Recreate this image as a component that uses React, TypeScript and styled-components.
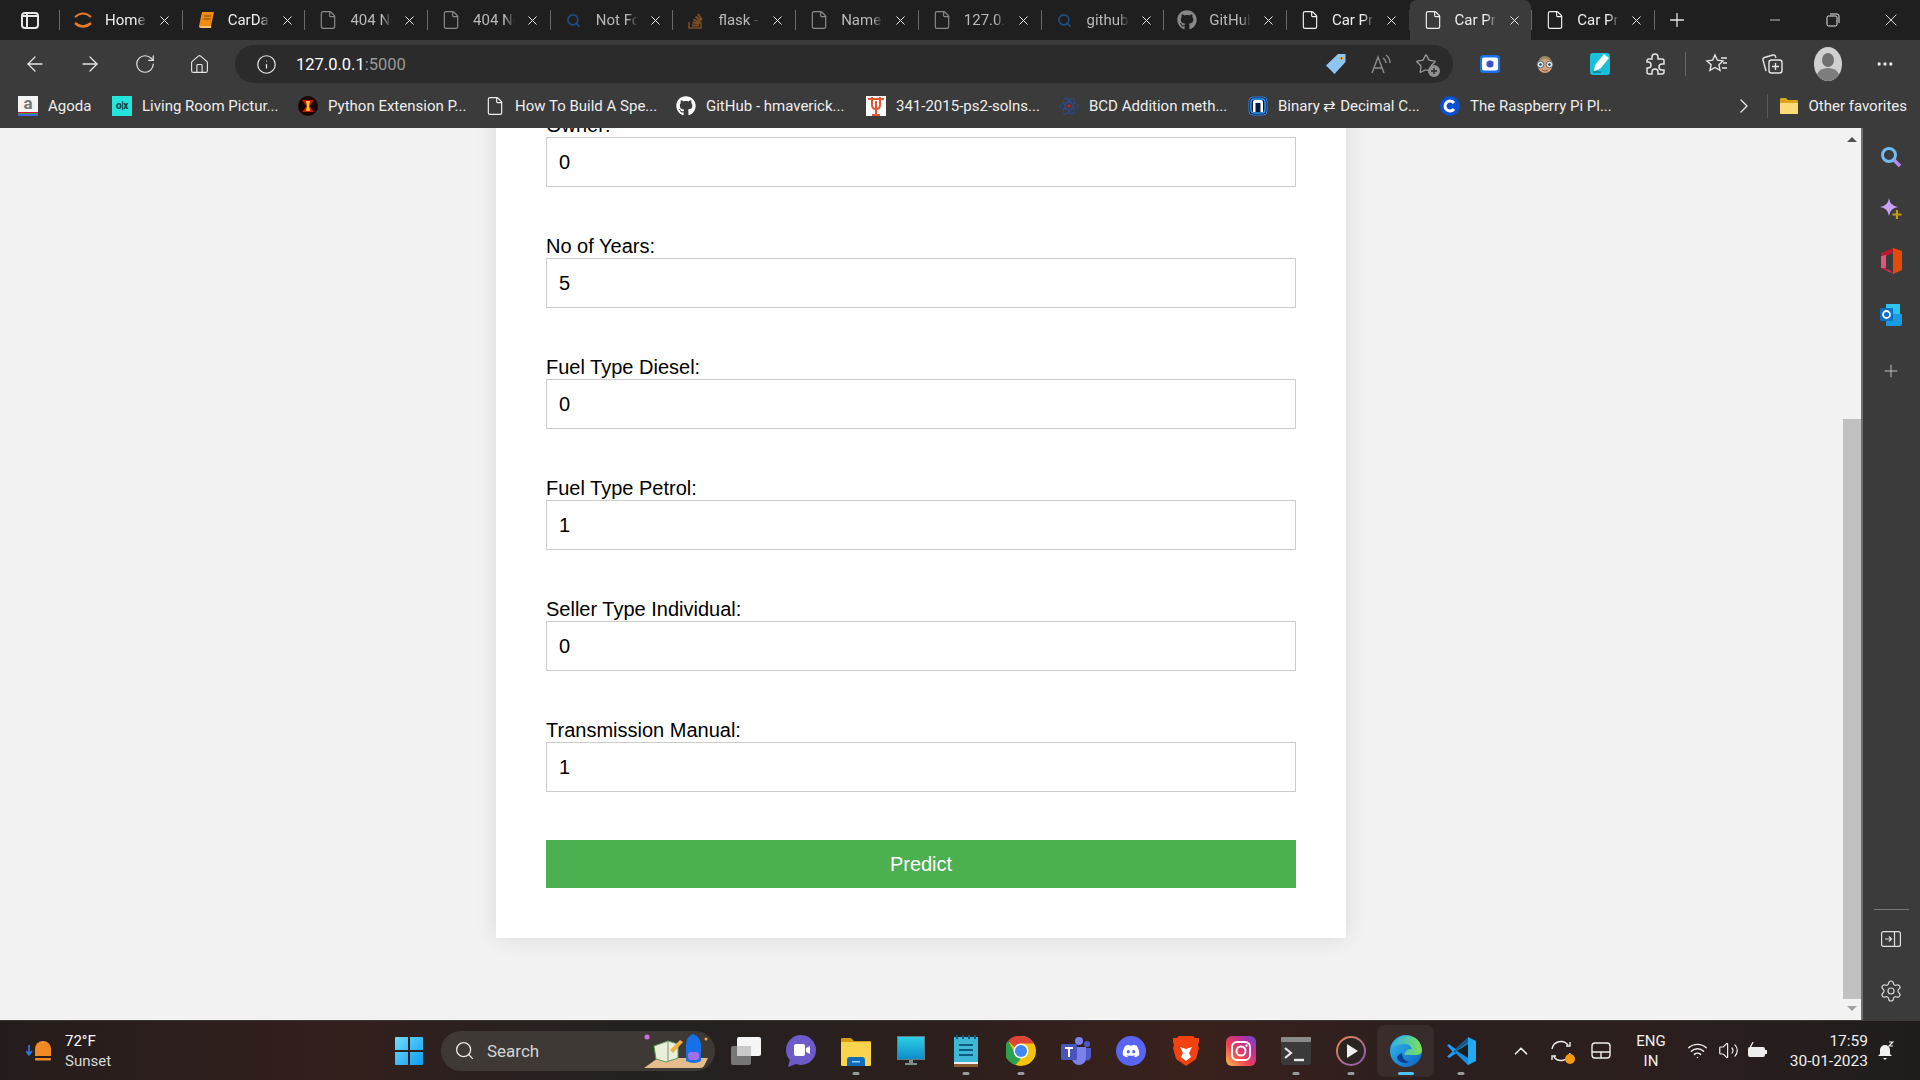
import React from 'react';
import styled, { createGlobalStyle } from 'styled-components';
import { ArrowLeft, ArrowRight, RotateCw, Home, Info, File, X, Plus, Minus, Search, Star, ChevronRight, ChevronUp, Ellipsis, Settings, Volume2, Wifi } from 'lucide-react';
import { FaGithub, FaDiscord } from 'react-icons/fa';

const Global = createGlobalStyle`
  html, body { margin: 0; padding: 0; height: 100%; overflow: hidden; background: #f2f2f2; }
  * { box-sizing: border-box; }
  #root { width: 1920px; height: 1080px; }
`;
const Screen = styled.div`
  width: 1920px; height: 1080px; display: flex; flex-direction: column; overflow: hidden;
  font-family: Roboto, "Liberation Sans", sans-serif;
`;
const TabStrip = styled.div`
  height: 40px; background: #1f1f1f; display: flex; align-items: stretch; padding-left: 59px; position: relative; flex: none;
`;
const SideToggle = styled.div`
  position: absolute; left: 21px; top: 12px; width: 18px; height: 17px; border: 2px solid #e8e8e8; border-radius: 4px;
  &::before { content: ''; position: absolute; left: 3px; top: -1px; bottom: -1px; width: 1.5px; background: #e8e8e8; }
  &::after { content: ''; position: absolute; left: 0; right: 0; top: 1px; height: 1.5px; background: #e8e8e8; }
`;
const Tab = styled.div<{ $active?: boolean }>`
  width: 122.7px; flex: none; display: flex; align-items: center; padding-left: 13px; position: relative;
  background: ${p => (p.$active ? '#3b3b3b' : 'transparent')};
  border-radius: ${p => (p.$active ? '8px 8px 0 0' : '0')};
  border-left: 1px solid ${p => (p.$active ? 'transparent' : '#6a6a6a')};
  background-clip: ${p => (p.$active ? 'border-box' : 'padding-box')};
  &::before {
    content: ''; position: absolute; left: -1px; top: 0; height: 10px; width: 1px; background: #1f1f1f;
  }
  &::after {
    content: ''; position: absolute; left: -1px; bottom: 0; height: 10px; width: 1px; background: #1f1f1f;
  }
`;
const TabIcon = styled.span`
  width: 20px; height: 20px; flex: none; display: flex; align-items: center; justify-content: center;
`;
const TabTitle = styled.span<{ $dim?: boolean }>`
  width: 42px; margin-left: 12px; flex: none; overflow: hidden; white-space: nowrap; font-size: 15px;
  color: ${p => (p.$dim ? '#b9b9b9' : '#eeeeee')};
  -webkit-mask-image: linear-gradient(to right, #000 75%, transparent 100%);
  mask-image: linear-gradient(to right, #000 75%, transparent 100%);
`;
const TabClose = styled.span`
  margin-left: 10px; display: flex; color: #e8e8e8;
`;
const NewTab = styled.div`
  width: 46px; display: flex; align-items: center; justify-content: center; color: #e8e8e8;
  border-left: 1px solid #6a6a6a; margin: 10px 0; flex: none;
`;
const WindowButtons = styled.div`
  margin-left: auto; display: flex; align-items: center; color: #e8e8e8;
`;
const WindowButton = styled.div`
  width: 58px; height: 40px; display: flex; align-items: center; justify-content: center;
`;
const Toolbar = styled.div`
  height: 43px; background: #3b3b3b; display: flex; align-items: flex-end; flex: none; padding-left: 7px;
`;
const NavButton = styled.div<{ $w?: number }>`
  width: ${p => p.$w ?? 55}px; height: 38px; display: flex; align-items: center; justify-content: center; color: #e6e6e6; flex: none;
`;
const Address = styled.div`
  width: 1218px; margin-left: 8px; height: 38px; background: #2b2b2b; border-radius: 19px; display: flex; align-items: center; padding-left: 21px; flex: none;
`;
const Url = styled.span`
  font-size: 16.5px; color: #fff; margin-left: 19px;
  span { color: #9a9a9a; }
`;
const AddressTools = styled.div`
  margin-left: auto; display: flex; align-items: center; padding-right: 5px;
`;
const ToolGroup = styled.div`
  margin-left: 9px; display: flex; align-items: center; height: 38px;
`;
const Divider = styled.div`
  width: 1px; height: 24px; background: #6a6a6a; margin: 0 3px; flex: none;
`;
const BookmarkBar = styled.div`
  height: 45px; background: #3b3b3b; display: flex; align-items: center; padding-left: 18px; flex: none;
`;
const Bookmark = styled.div<{ $w: number }>`
  width: ${p => p.$w}px; flex: none; display: flex; align-items: center; gap: 10px; color: #eeeeee; font-size: 15px; white-space: nowrap;
`;
const Fav = styled.span<{ $bg?: string }>`
  width: 20px; height: 20px; flex: none; display: flex; align-items: center; justify-content: center;
  background: ${p => p.$bg ?? 'transparent'}; font-size: 10px; font-weight: 700;
`;
const BarEnd = styled.div`
  margin-left: auto; display: flex; align-items: center; color: #eee; font-size: 15px; padding-right: 13px;
`;
const BarSep = styled.div`
  width: 1px; height: 24px; background: #5a5a5a; margin: 0 11px;
`;
const OtherLabel = styled.span`
  margin-left: 9px;
`;
const Body = styled.div`
  flex: 1; min-height: 0; display: flex; background: #f2f2f2;
`;
const Page = styled.main`
  flex: 1; min-width: 0; display: flex; flex-direction: column; justify-content: flex-end; align-items: center; overflow: hidden; padding: 0 1px 82px 0;
`;
const Card = styled.form`
  width: 850px; flex: none; background: #fff; padding: 50px; display: flex; flex-direction: column; gap: 48px;
  box-shadow: 0 0 20px rgba(0, 0, 0, 0.1); font-family: "Liberation Sans", Arial, sans-serif;
`;
const Field = styled.div`
  display: flex; flex-direction: column;
`;
const Label = styled.label`
  font-size: 20px; line-height: 23px; color: #000;
`;
const Input = styled.input`
  width: 100%; height: 50px; border: 1px solid #ccc; padding: 0 12px; font: 20px "Liberation Sans", Arial, sans-serif; color: #000; background: #fff; outline: none; border-radius: 0;
`;
const Submit = styled.button`
  width: 100%; height: 48px; border: 0; background: #4caf50; color: #fff; font: 20px "Liberation Sans", Arial, sans-serif; padding: 0;
`;
const Scrollbar = styled.div`
  width: 20px; flex: none; display: flex; flex-direction: column; align-items: stretch; border-right: 2px solid #707070; padding-bottom: 9px;
`;
const Arrow = styled.div<{ $up?: boolean }>`
  width: 0; height: 0; align-self: center; border-left: 5px solid transparent; border-right: 5px solid transparent;
  ${p => (p.$up ? 'border-bottom: 5px solid #505050; margin-top: 9px;' : 'border-top: 5px solid #a0a0a0; margin-top: 7px;')}
`;
const Thumb = styled.div`
  height: 582px; background: #c1c1c1; margin-top: 277px;
`;
const Sidebar = styled.aside`
  width: 57px; flex: none; background: #3b3b3b; display: flex; flex-direction: column; align-items: center; padding: 16px 1px 0 0; color: #d8d8d8;
`;
const SideIcon = styled.div<{ $mb?: number }>`
  width: 26px; height: 26px; margin-bottom: ${p => p.$mb ?? 26}px; display: flex; align-items: center; justify-content: center; flex: none;
`;
const SideSpacer = styled.div`
  flex: 1;
`;
const SideRule = styled.div`
  width: 35px; height: 1px; background: #767676; margin-bottom: 16px; flex: none;
`;
const Taskbar = styled.footer`
  height: 60px; flex: none; display: flex; align-items: center; position: relative; color: #fff;
  background: linear-gradient(90deg, #241c1b 0%, #33201d 18%, #222120 33%, #2b1f1d 48%, #3a211c 62%, #2a1f1e 75%, #2c1f1e 85%, #1f1d1c 100%);
  border-top: 1px solid #3b3837;
`;
const Weather = styled.div`
  width: 380px; flex: none; display: flex; align-items: center; padding-left: 26px; gap: 9px;
`;
const WeatherText = styled.div`
  font-size: 15px; line-height: 20px; color: #fff;
  small { display: block; font-size: 15px; color: #d8d8d8; }
`;
const TaskIcon = styled.div<{ $w?: number; $active?: boolean }>`
  width: ${p => p.$w ?? 55}px; height: 50px; flex: none; display: flex; align-items: center; justify-content: center; position: relative;
  ${p => (p.$active ? 'background: rgba(255,255,255,0.06); border-radius: 6px; outline: 1px solid rgba(255,255,255,0.05);' : '')}
`;
const RunDot = styled.span<{ $on?: boolean }>`
  position: absolute; bottom: 1px; left: 50%; transform: translateX(-50%); height: 3px; border-radius: 2px;
  width: ${p => (p.$on ? '16px' : '7px')}; background: ${p => (p.$on ? '#4cc2ff' : '#9a9a9a')};
`;
const SearchBox = styled.div`
  width: 274px; height: 40px; flex: none; border-radius: 20px; background: #3f3936; display: flex; align-items: center; padding-left: 13px; gap: 12px; color: #d4d4d4; font-size: 17px; position: relative; margin: 0 3px;
`;
const SearchArt = styled.span`
  position: absolute; right: 5px; top: 2px; display: flex;
`;
const Tray = styled.div`
  margin-left: auto; display: flex; align-items: center; padding-right: 18px; color: #eee;
`;
const TrayItem = styled.div<{ $w?: number }>`
  width: ${p => p.$w ?? 40}px; display: flex; align-items: center; justify-content: center; flex: none; position: relative;
`;
const Lang = styled.div`
  width: 60px; text-align: center; font-size: 15px; line-height: 20px; color: #f0f0f0; flex: none;
`;
const Clock = styled.div`
  width: 95px; text-align: right; font-size: 15.5px; line-height: 20px; color: #f0f0f0; flex: none; white-space: nowrap;
`;
const IconStack = styled.span`
  position: relative; display: flex;
  svg + svg { position: absolute; right: -3px; bottom: -2px; }
`;
const AgodaFav = styled(Fav)`
  color: #777; font-size: 17px; background: linear-gradient(#f4f4f4 80%, #e04 80%, #e04 85%, #3a3 85%, #3a3 92%, #46d 92%); align-items: flex-start; line-height: 15px;
`;
const OlxFav = styled(Fav)`
  color: #002f34; letter-spacing: -0.5px; background: #23e5db;
`;

const Fire = () => (
  <svg width="20" height="20" viewBox="0 0 20 20" fill="none"><path d="M2 7 Q10 0 18 7" stroke="#e8792a" strokeWidth="2" /><path d="M2 13 Q10 20 18 13" stroke="#e8792a" strokeWidth="2.4" /></svg>
);
const Book = () => (
  <svg width="20" height="20" viewBox="0 0 20 20"><path d="M6 2h12l-3 14H3z" fill="#f08a10" /><path d="M3 16q0 2 2 2h10l.4-2z" fill="#ffc274" /><path d="M8 6h7M7.5 9h7" stroke="#7a4500" /></svg>
);
const Lens = () => <Search size={15} color="#1d4f86" strokeWidth={2.5} />;
const StackOv = () => (
  <svg width="18" height="20" viewBox="0 0 18 20" fill="none" stroke="#7b4d24" strokeWidth="2"><path d="M2 12v6h12v-6" strokeWidth="1.5" /><path d="M5 15.5h7M5.5 12.5l7 1M6.5 9.5l6.5 3M8.5 6.5l5.5 4.5M11 4l4 6" /></svg>
);
const Gh = ({ c = '#888' }: { c?: string }) => <FaGithub size={20} color={c} />;
const Doc = ({ c }: { c: string }) => <File size={20} color={c} strokeWidth={1.4} />;

const tabs: { icon: React.ReactNode; title: string; dim?: boolean; active?: boolean }[] = [
  { icon: <Fire />, title: 'Home' },
  { icon: <Book />, title: 'CarData' },
  { icon: <Doc c="#8a8a8a" />, title: '404 Not', dim: true },
  { icon: <Doc c="#8a8a8a" />, title: '404 Not', dim: true },
  { icon: <Lens />, title: 'Not Found', dim: true },
  { icon: <StackOv />, title: 'flask - ', dim: true },
  { icon: <Doc c="#8a8a8a" />, title: 'NameError', dim: true },
  { icon: <Doc c="#8a8a8a" />, title: '127.0.0.1', dim: true },
  { icon: <Lens />, title: 'github', dim: true },
  { icon: <Gh />, title: 'GitHub', dim: true },
  { icon: <Doc c="#f0f0f0" />, title: 'Car Price' },
  { icon: <Doc c="#f0f0f0" />, title: 'Car Price', active: true },
  { icon: <Doc c="#f0f0f0" />, title: 'Car Price' },
];

const Tag = () => (
  <svg width="22" height="22" viewBox="0 0 22 22"><path d="M13 1h7.5v8L9.5 21 1 12.5z" fill="#8ec5f2" /><circle cx="16.5" cy="5.2" r="1.8" fill="#e8b020" /><circle cx="16.5" cy="5.2" r=".8" fill="#333" /></svg>
);
const ReadAloud = () => (
  <svg width="24" height="24" viewBox="0 0 24 24" fill="none" stroke="#8d8d8d" strokeWidth="1.4"><path d="M3 21 9 5l6 16M5 16h8" /><path d="M14 6q3 2 3 5M17 3q4 3 4 8" /></svg>
);
const FavAdd = () => (
  <IconStack>
    <Star size={22} color="#9a9a9a" strokeWidth={1.4} />
    <svg width="12" height="12" viewBox="0 0 12 12"><circle cx="6" cy="6" r="6" fill="#8f8f8f" /><path d="M6 3v6M3 6h6" stroke="#2b2b2b" strokeWidth="1.4" /></svg>
  </IconStack>
);
const ExtCam = () => (
  <svg width="22" height="22" viewBox="0 0 22 22"><rect x="1" y="2" width="20" height="18" rx="3.5" fill="#1a73e8" /><rect x="3" y="4.5" width="16" height="13" rx="2" fill="#fff" /><circle cx="11" cy="11" r="3.6" fill="#3f51c8" /></svg>
);
const ExtFace = () => (
  <svg width="24" height="24" viewBox="0 0 24 24"><path d="M5 12a7 8 0 0 1 14 0z" fill="#9c8a66" /><circle cx="12" cy="14" r="7" fill="#d9a27e" /><circle cx="7.5" cy="12.5" r="3.4" fill="#cfeaf5" stroke="#666" /><circle cx="16.5" cy="12.5" r="3.4" fill="#cfeaf5" stroke="#666" /><circle cx="7.5" cy="12.5" r="1.2" fill="#333" /><circle cx="16.5" cy="12.5" r="1.2" fill="#333" /><path d="M9 18q3 2 6 0" stroke="#a0523a" fill="none" /></svg>
);
const ExtPen = () => (
  <svg width="22" height="24" viewBox="0 0 22 24"><rect x="1" y="1" width="20" height="22" rx="3" fill="#18bfd8" /><path d="M15 2l5 4-9 11-6 2 1-6z" fill="#fff" /><path d="M4 20h8" stroke="#0b7f91" strokeWidth="1.5" /></svg>
);
const Puzzle = () => (
  <svg width="22" height="24" viewBox="0 0 22 24" fill="none" stroke="#e6e6e6" strokeWidth="1.5"><path d="M8 5a3 3 0 0 1 6 0v2h4a2 2 0 0 1 2 2v3h-2a3 3 0 0 0 0 6h2v2a2 2 0 0 1-2 2h-4v-2a3 3 0 0 0-6 0v2H5a2 2 0 0 1-2-2v-4h1a3 3 0 0 0 0-6H3V9a2 2 0 0 1 2-2h3z" /></svg>
);
const FavList = () => (
  <svg width="24" height="24" viewBox="0 0 24 24" fill="none" stroke="#e6e6e6" strokeWidth="1.4"><path d="M10 3l2.4 5.2 5.6.7-4.1 3.8 1.1 5.6-5-2.8-5 2.8 1.1-5.6L2 8.9l5.6-.7z" /><path d="M16 6h6M18 11h4M17 16h5" /></svg>
);
const Collections = () => (
  <svg width="24" height="24" viewBox="0 0 24 24" fill="none" stroke="#e6e6e6" strokeWidth="1.4"><rect x="9" y="8" width="13" height="13" rx="2.5" /><path d="M15.5 11v7M12 14.5h7" /><path d="M6 19 3 8a2 2 0 0 1 1.5-2.5L13 3a2 2 0 0 1 2.5 1.5L16 6" /></svg>
);
const Profile = () => (
  <svg width="28" height="34" viewBox="0 0 28 34"><ellipse cx="14" cy="17" rx="14" ry="17" fill="#d0d0d0" /><ellipse cx="14" cy="13" rx="6" ry="7" fill="#6f6f6f" /><path d="M3 27q3-6 11-6t11 6q-4 7-11 7T3 27" fill="#7d7d7d" /></svg>
);
const Olx = () => <OlxFav>o|x</OlxFav>;
const Agoda = () => <AgodaFav>a</AgodaFav>;
const Fireball = () => (
  <svg width="20" height="20" viewBox="0 0 20 20"><circle cx="10" cy="10" r="10" fill="#1a0503" /><path d="M4 4h12L11.5 10 16 16H4l4.5-6z" fill="#c81a05" /><path d="M8 5h4l-1 5 1 5H8l1-5z" fill="#ffcc20" /></svg>
);
const UT = () => (
  <Fav $bg="#fff"><svg width="18" height="20" viewBox="0 0 18 20" fill="none" stroke="#e4572e" strokeWidth="2"><path d="M1 3h16M5 1v8q0 4 4 4t4-4V1M9 5v14M5 19h8" /></svg></Fav>
);
const Atom = () => (
  <svg width="20" height="20" viewBox="0 0 20 20" fill="none" stroke="#2c4a8a"><ellipse cx="10" cy="10" rx="9" ry="3.5" /><ellipse cx="10" cy="10" rx="9" ry="3.5" transform="rotate(60 10 10)" /><ellipse cx="10" cy="10" rx="9" ry="3.5" transform="rotate(120 10 10)" /><circle cx="10" cy="10" r="1.5" fill="#d01f2f" stroke="none" /></svg>
);
const Nblue = () => (
  <svg width="20" height="20" viewBox="0 0 20 20"><rect x="1" y="1" width="18" height="18" rx="4" fill="#0a1a3a" stroke="#2f80ed" /><path d="M5 16V6q0-2 2-2h6q2 0 2 2v10h-2.5V7h-5v9z" fill="#fff" /><rect x="3" y="3" width="14" height="14" rx="3" fill="none" stroke="#2f9cf0" strokeWidth="1.4" /></svg>
);
const BlueC = () => (
  <svg width="20" height="20" viewBox="0 0 20 20"><circle cx="10" cy="10" r="10" fill="#0a50d0" /><path d="M14 7a5 5 0 1 0 0 6" stroke="#fff" strokeWidth="3" fill="none" /></svg>
);
const Folder = () => (
  <svg width="20" height="20" viewBox="0 0 20 20"><path d="M1 3a1 1 0 0 1 1-1h5l2 2h9a1 1 0 0 1 1 1v12a1 1 0 0 1-1 1H2a1 1 0 0 1-1-1z" fill="#d9a520" /><path d="M1 7h18v10a1 1 0 0 1-1 1H2a1 1 0 0 1-1-1z" fill="#fbdc78" /></svg>
);

const bookmarks: { w: number; fav: React.ReactNode; text: string }[] = [
  { w: 94, fav: <Agoda />, text: 'Agoda' },
  { w: 186, fav: <Olx />, text: 'Living Room Pictur...' },
  { w: 187, fav: <Fireball />, text: 'Python Extension P...' },
  { w: 191, fav: <Doc c="#f0f0f0" />, text: 'How To Build A Spe...' },
  { w: 190, fav: <FaGithub size={20} color="#fff" />, text: 'GitHub - hmaverick...' },
  { w: 193, fav: <UT />, text: '341-2015-ps2-solns...' },
  { w: 189, fav: <Atom />, text: 'BCD Addition meth...' },
  { w: 192, fav: <Nblue />, text: 'Binary ⇄ Decimal C...' },
  { w: 260, fav: <BlueC />, text: 'The Raspberry Pi Pl...' },
];

const fields: [string, string][] = [
  ['Owner:', '0'],
  ['No of Years:', '5'],
  ['Fuel Type Diesel:', '0'],
  ['Fuel Type Petrol:', '1'],
  ['Seller Type Individual:', '0'],
  ['Transmission Manual:', '1'],
];

const WinLogo = () => (
  <svg width="30" height="30" viewBox="0 0 30 30"><defs><linearGradient id="w" x1="0" y1="0" x2="1" y2="1"><stop offset="0" stopColor="#6fdcff" /><stop offset="1" stopColor="#0f9bf0" /></linearGradient></defs><path d="M1 2a1 1 0 0 1 1-1h12v13H1zM16 1h12a1 1 0 0 1 1 1v12H16zM1 16h13v13H2a1 1 0 0 1-1-1zM16 16h13v12a1 1 0 0 1-1 1H16z" fill="url(#w)" /></svg>
);
const SearchPic = () => (
  <svg width="66" height="36" viewBox="0 0 66 36"><path d="M0 35l14-10h50l-4 8q-1 2-4 2z" fill="#e5bd8c" /><path d="M10 13l14-5 10 3v14l-12 4-10-3z" fill="#e8f0d8" stroke="#5a9a60" /><path d="M24 9v19" stroke="#888" /><path d="M26 17l10-10 3 2-10 11z" fill="#f4b040" /><path d="M42 28V12q0-8 7-11 8 3 8 11v16q-7 4-15 0z" fill="#1670e8" /><rect x="44" y="19" width="11" height="8" rx="3" fill="#a070e8" /><circle cx="3" cy="4" r="2.5" fill="#d070e0" /><circle cx="62" cy="6" r="1.5" fill="#f4b040" /></svg>
);
const TaskView = () => (
  <svg width="32" height="30" viewBox="0 0 32 30"><rect x="1" y="10" width="20" height="19" rx="2" fill="#777" /><rect x="7" y="1" width="24" height="19" rx="2" fill="#f5f5f5" /><rect x="7" y="10" width="14" height="10" fill="#c9c9c9" /></svg>
);
const Meet = () => (
  <svg width="30" height="32" viewBox="0 0 30 32"><circle cx="15" cy="15" r="15" fill="#6e5ac8" /><path d="M4 24l-2 8 8-3z" fill="#6e5ac8" /><rect x="8" y="9" width="11" height="12" rx="2" fill="#fff" /><path d="M20 13l4-2v8l-4-2z" fill="#fff" /></svg>
);
const Explorer = () => (
  <svg width="30" height="30" viewBox="0 0 30 30"><path d="M0 3a1 1 0 0 1 1-1h9l3 3h16a1 1 0 0 1 1 1v3H0z" fill="#d99c10" /><path d="M0 6h30v23a1 1 0 0 1-1 1H1a1 1 0 0 1-1-1z" fill="#fcd34d" /><path d="M6 30v-6a3 3 0 0 1 3-3h12a3 3 0 0 1 3 3v6z" fill="#0f6cbd" /><rect x="11" y="25" width="8" height="1.5" fill="#8ec9f5" /></svg>
);
const Monitor = () => (
  <svg width="28" height="30" viewBox="0 0 28 30"><defs><linearGradient id="m" x1="0" y1="0" x2="0" y2="1"><stop offset="0" stopColor="#2ccfe6" /><stop offset="1" stopColor="#0f8cc8" /></linearGradient></defs><rect width="28" height="24" fill="#5d7d88" /><rect x="1" y="1" width="26" height="22" fill="url(#m)" /><rect x="12" y="24" width="4" height="3" fill="#7d8d90" /><rect x="8" y="27" width="12" height="2" fill="#7d8d90" /></svg>
);
const Notes = () => (
  <svg width="24" height="32" viewBox="0 0 24 32"><rect y="2" width="24" height="28" fill="#3fb8d8" /><rect y="28" width="24" height="4" fill="#8a5a30" /><rect y="27" width="24" height="2" fill="#eee" /><path d="M3 0v4M9 0v4M15 0v4M21 0v4" stroke="#0f5a80" strokeWidth="2" /><path d="M5 10h14M5 15h14M5 20h14" stroke="#0f5a80" strokeWidth="2" /></svg>
);
const Chrome = () => (
  <svg width="30" height="30" viewBox="0 0 30 30"><circle cx="15" cy="15" r="15" fill="#f4c20d" /><path d="M15 0a15 15 0 0 1 13 7.5H15a7.5 7.5 0 0 0-6.5 3.8L2 4.8A15 15 0 0 1 15 0" fill="#db4437" /><path d="M2 4.8l6.5 11.4A7.5 7.5 0 0 0 15 22.5L9.5 29A15 15 0 0 1 2 4.8" fill="#2ba14b" /><circle cx="15" cy="15" r="7.5" fill="#fff" /><circle cx="15" cy="15" r="6" fill="#4285f4" /></svg>
);
const Teams = () => (
  <svg width="30" height="30" viewBox="0 0 30 30"><circle cx="18" cy="5" r="4" fill="#7b83eb" /><circle cx="26" cy="8" r="3" fill="#5059c9" /><path d="M22 12h8v9a4 4 0 0 1-6 3z" fill="#5059c9" /><path d="M11 11h14v11a7 7 0 0 1-14 0z" fill="#7b83eb" /><rect y="8" width="16" height="16" rx="1.5" fill="#4b53bc" /><path d="M4 12h8M8 12v9" stroke="#fff" strokeWidth="2" /></svg>
);
const Discord = () => (
  <svg width="30" height="30" viewBox="0 0 30 30"><circle cx="15" cy="15" r="15" fill="#5865f2" /><foreignObject x="6" y="6" width="18" height="18"><FaDiscord size={18} color="#fff" /></foreignObject></svg>
);
const Brave = () => (
  <svg width="26" height="30" viewBox="0 0 26 30"><path d="M6 0h14l2 2 4-0v4l-1 3 1 3-3 11-10 7-10-7-3-11 1-3-1-3V2h4z" fill="#f1420f" /><path d="M7 11l6 2 6-2-3 6 2 4-5 4-5-4 2-4z" fill="#fff" /></svg>
);
const Insta = () => (
  <svg width="30" height="30" viewBox="0 0 30 30"><defs><linearGradient id="i" x1="0" y1="1" x2="1" y2="0"><stop offset="0" stopColor="#fdc04e" /><stop offset=".4" stopColor="#ee3f54" /><stop offset=".75" stopColor="#b92ea0" /><stop offset="1" stopColor="#5b51d8" /></linearGradient></defs><rect width="30" height="30" rx="6" fill="url(#i)" /><rect x="6" y="6" width="18" height="18" rx="5" fill="none" stroke="#fff" strokeWidth="2" /><circle cx="15" cy="15" r="4.5" fill="none" stroke="#fff" strokeWidth="2" /><circle cx="20.5" cy="9.5" r="1.2" fill="#fff" /></svg>
);
const Term = () => (
  <svg width="30" height="28" viewBox="0 0 30 28"><rect width="30" height="28" rx="2" fill="#3a3a3a" /><rect width="30" height="5" rx="1" fill="#8a8a8a" /><path d="M4 11l6 5-6 5" stroke="#e8e8e8" strokeWidth="2.2" fill="none" /><path d="M13 23h10" stroke="#e8e8e8" strokeWidth="2.4" /></svg>
);
const Play = () => (
  <svg width="30" height="30" viewBox="0 0 30 30"><defs><linearGradient id="p" x1="0" y1="0" x2="1" y2="1"><stop offset="0" stopColor="#e8894a" /><stop offset="1" stopColor="#8a55c0" /></linearGradient></defs><circle cx="15" cy="15" r="14" fill="#2a2420" stroke="url(#p)" strokeWidth="2" /><path d="M11 8l11 7-11 7z" fill="#eee" /></svg>
);
const Edge = () => (
  <svg width="32" height="32" viewBox="0 0 32 32"><defs><linearGradient id="e" x1="0" y1="0" x2="1" y2="1"><stop offset="0" stopColor="#35c1f1" /><stop offset="1" stopColor="#0a5fc0" /></linearGradient><linearGradient id="e2" x1="0" y1="0" x2="1" y2="0"><stop offset="0" stopColor="#2fb5e8" /><stop offset="1" stopColor="#7ee05a" /></linearGradient></defs><circle cx="16" cy="16" r="16" fill="url(#e)" /><path d="M2 12Q6 1 17 1q13 0 15 14 0 5-6 5H14q2-7 8-6-2-5-7-5Q7 9 2 12" fill="url(#e2)" /><path d="M12 18q0 7 7 9-6 3-11-2-3-4 4-7" fill="#0c3f90" /></svg>
);
const VSCode = () => (
  <svg width="30" height="30" viewBox="0 0 30 30"><path d="M22 1l8 4v20l-8 4-13-13 13-9.5z" fill="#23a9f2" /><path d="M22 1L7 15l15 14z" fill="#0f7fd0" opacity=".6" /><path d="M22 8L11 15l11 7z" fill="#1f1d1c" /><path d="M1 9.5L3 8l7 5.5-3 2.5zM7 15l3 2.5L3 22l-2-1.5z" fill="#1f9cf0" /></svg>
);
const Sync = () => (
  <IconStack>
    <svg width="22" height="22" viewBox="0 0 22 22" fill="none" stroke="#eee" strokeWidth="1.4"><path d="M2 9a9 9 0 0 1 16-4M20 2v4h-4M20 13a9 9 0 0 1-16 4M2 20v-4h4" /></svg>
    <svg width="10" height="10" viewBox="0 0 10 10"><circle cx="5" cy="5" r="5" fill="#f79a0f" /></svg>
  </IconStack>
);
const Touchpad = () => (
  <svg width="20" height="18" viewBox="0 0 20 18" fill="none" stroke="#eee" strokeWidth="1.4"><rect x="1" y="1" width="18" height="15" rx="3" /><path d="M1 10h18M10 10v6" /></svg>
);
const Battery = () => (
  <svg width="22" height="18" viewBox="0 0 22 18"><rect x="1" y="5" width="17" height="10" rx="2" fill="#eee" /><rect x="18" y="8" width="2" height="4" fill="#eee" /><path d="M6 0L3 6h3L5 10" stroke="#eee" fill="none" strokeWidth="1.3" /></svg>
);
const Bell = () => (
  <svg width="18" height="20" viewBox="0 0 18 20"><path d="M9 4a5 5 0 0 1 5 5v4l2 2H2l2-2V9a5 5 0 0 1 5-5zM7 17h4l-2 2z" fill="#f0f0f0" /><path d="M13 1h4l-4 4h4" stroke="#f0f0f0" fill="none" strokeWidth="1.2" /></svg>
);
const Weathericon = () => (
  <svg width="30" height="24" viewBox="0 0 30 24"><path d="M3 6v9M0 12l3 4 3-4" stroke="#2f7cf0" strokeWidth="1.6" fill="none" /><path d="M9 17V10a8 8 0 0 1 16 0v7z" fill="#f08a24" /><path d="M17 2l1.5 2h-3z" fill="#f6b020" /><rect x="9" y="19" width="16" height="2.5" rx="1" fill="#f08a24" /></svg>
);

const SideLens = () => (
  <svg width="22" height="22" viewBox="0 0 22 22" fill="none"><circle cx="9" cy="9" r="6.5" stroke="#70bcf5" strokeWidth="3" /><path d="M14 14l6 6" stroke="#b08af0" strokeWidth="3.5" /></svg>
);
const Spark = () => (
  <svg width="24" height="24" viewBox="0 0 24 24"><path d="M10 1q1 8 9 9-8 1-9 9-1-8-9-9 8-1 9-9" fill="#c9a0fa" /><path d="M18 13v9M13.5 17.5h9" stroke="#c99a10" strokeWidth="2.2" /></svg>
);
const Office = () => (
  <svg width="22" height="26" viewBox="0 0 22 26"><path d="M13 0l9 3v19l-9 4z" fill="#e64a0a" /><path d="M13 0L1 5v15l5 2V8l7-3z" fill="#b81b30" /><path d="M1 20l12 6-3-4z" fill="#e02050" /><path d="M1 8l5-1v13l-5 0z" fill="#e0567a" /></svg>
);
const Outlook = () => (
  <svg width="22" height="22" viewBox="0 0 22 22"><rect x="6" y="0" width="14" height="10" fill="#2ec4f0" /><path d="M6 10h16v10a2 2 0 0 1-2 2H6z" fill="#1a9ae0" /><rect x="0" y="4" width="13" height="13" rx="1.5" fill="#0a6fc8" /><circle cx="6.5" cy="10.5" r="3.5" fill="none" stroke="#fff" strokeWidth="1.8" /></svg>
);
const PanelIcon = () => (
  <svg width="20" height="16" viewBox="0 0 20 16" fill="none" stroke="#e0e0e0" strokeWidth="1.2"><rect x=".6" y=".6" width="18.8" height="14.8" rx="2" /><path d="M13.5 1v14" /><path d="M4 8h6M8 5.5L10.5 8 8 10.5" /></svg>
);

const taskIcons: { el: React.ReactNode; dot?: boolean }[] = [
  { el: <Meet /> },
  { el: <Explorer />, dot: true },
  { el: <Monitor /> },
  { el: <Notes />, dot: true },
  { el: <Chrome />, dot: true },
  { el: <Teams /> },
  { el: <Discord /> },
  { el: <Brave /> },
  { el: <Insta /> },
  { el: <Term />, dot: true },
  { el: <Play />, dot: true },
];

export default function App() {
  return (
    <>
      <Global />
      <Screen>
        <TabStrip>
          <SideToggle />
          {tabs.map((t, i) => (
            <Tab key={i} $active={t.active}>
              <TabIcon>{t.icon}</TabIcon>
              <TabTitle $dim={t.dim}>{t.title}</TabTitle>
              <TabClose><X size={15} strokeWidth={1.6} /></TabClose>
            </Tab>
          ))}
          <NewTab><Plus size={22} strokeWidth={1.4} /></NewTab>
          <WindowButtons>
            <WindowButton><Minus size={16} strokeWidth={1.2} /></WindowButton>
            <WindowButton>
              <svg width="14" height="14" viewBox="0 0 14 14" fill="none" stroke="#e8e8e8"><rect x="1" y="3" width="10" height="10" rx="1.5" /><path d="M4 1h7a2 2 0 0 1 2 2v7" /></svg>
            </WindowButton>
            <WindowButton><X size={20} strokeWidth={1.1} /></WindowButton>
          </WindowButtons>
        </TabStrip>
        <Toolbar>
          <NavButton><ArrowLeft size={24} strokeWidth={1.3} /></NavButton>
          <NavButton><ArrowRight size={24} strokeWidth={1.3} /></NavButton>
          <NavButton><RotateCw size={22} strokeWidth={1.3} /></NavButton>
          <NavButton><Home size={21} strokeWidth={1.3} /></NavButton>
          <Address>
            <Info size={21} color="#e8e8e8" strokeWidth={1.4} />
            <Url>127.0.0.1<span>:5000</span></Url>
            <AddressTools>
              <NavButton $w={45}><Tag /></NavButton>
              <NavButton $w={45}><ReadAloud /></NavButton>
              <NavButton $w={45}><FavAdd /></NavButton>
            </AddressTools>
          </Address>
          <ToolGroup>
            <NavButton><ExtCam /></NavButton>
            <NavButton><ExtFace /></NavButton>
            <NavButton><ExtPen /></NavButton>
            <NavButton><Puzzle /></NavButton>
            <Divider />
            <NavButton><FavList /></NavButton>
            <NavButton><Collections /></NavButton>
            <NavButton $w={58}><Profile /></NavButton>
            <NavButton $w={55}><Ellipsis size={20} /></NavButton>
          </ToolGroup>
        </Toolbar>
        <BookmarkBar>
          {bookmarks.map((b, i) => (
            <Bookmark key={i} $w={b.w}>{b.fav}{b.text}</Bookmark>
          ))}
          <BarEnd>
            <ChevronRight size={24} strokeWidth={1.3} />
            <BarSep />
            <Fav><Folder /></Fav>
            <OtherLabel>Other favorites</OtherLabel>
          </BarEnd>
        </BookmarkBar>
        <Body>
          <Page>
            <Card onSubmit={e => e.preventDefault()}>
              {fields.map(([l, v]) => (
                <Field key={l}>
                  <Label>{l}</Label>
                  <Input readOnly value={v} />
                </Field>
              ))}
              <Submit type="submit">Predict</Submit>
            </Card>
          </Page>
          <Scrollbar>
            <Arrow $up />
            <Thumb />
            <Arrow />
          </Scrollbar>
          <Sidebar>
            <SideIcon><SideLens /></SideIcon>
            <SideIcon><Spark /></SideIcon>
            <SideIcon $mb={28}><Office /></SideIcon>
            <SideIcon $mb={30}><Outlook /></SideIcon>
            <SideIcon><Plus size={20} strokeWidth={1} /></SideIcon>
            <SideSpacer />
            <SideRule />
            <SideIcon><PanelIcon /></SideIcon>
            <SideIcon $mb={16}><Settings size={24} strokeWidth={1.2} /></SideIcon>
          </Sidebar>
        </Body>
        <Taskbar>
          <Weather>
            <Weathericon />
            <WeatherText>72°F<small>Sunset</small></WeatherText>
          </Weather>
          <TaskIcon $w={58}><WinLogo /></TaskIcon>
          <SearchBox>
            <Search size={21} strokeWidth={1.5} color="#e8e8e8" />
            Search
            <SearchArt><SearchPic /></SearchArt>
          </SearchBox>
          <TaskIcon><TaskView /></TaskIcon>
          {taskIcons.map((t, i) => (
            <TaskIcon key={i}>{t.el}{t.dot && <RunDot />}</TaskIcon>
          ))}
          <TaskIcon $active><Edge /><RunDot $on /></TaskIcon>
          <TaskIcon><VSCode /><RunDot /></TaskIcon>
          <Tray>
            <TrayItem><ChevronUp size={22} strokeWidth={1.8} /></TrayItem>
            <TrayItem><Sync /></TrayItem>
            <TrayItem><Touchpad /></TrayItem>
            <Lang>ENG<br />IN</Lang>
            <TrayItem $w={32}><Wifi size={21} strokeWidth={1.7} /></TrayItem>
            <TrayItem $w={30}><Volume2 size={21} strokeWidth={1.4} /></TrayItem>
            <TrayItem $w={30}><Battery /></TrayItem>
            <Clock>17:59<br />30-01-2023</Clock>
            <TrayItem $w={34}><Bell /></TrayItem>
          </Tray>
        </Taskbar>
      </Screen>
    </>
  );
}
